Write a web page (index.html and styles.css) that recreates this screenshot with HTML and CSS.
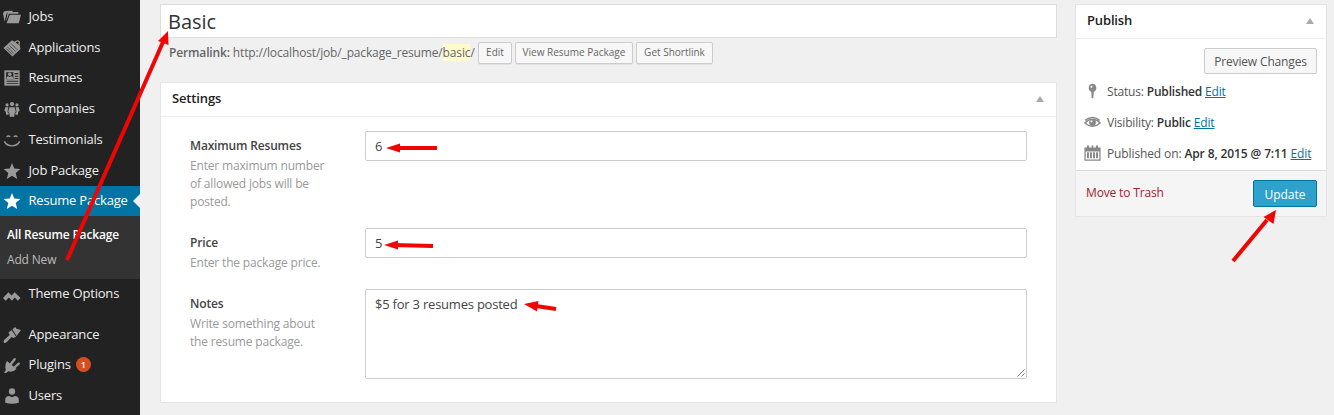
FILE: index.html
```html
<!DOCTYPE html>
<html lang="en">
<head>
<meta charset="utf-8">
<title>Edit Resume Package</title>
<link rel="stylesheet" href="styles.css">
</head>
<body>
<div class="admin">
  <nav class="sidebar">
    <a class="item"><svg class="icon" viewBox="0 0 20 20"><path d="M0 6l1-2 4-1 1 1.500-2 1.500-2.500 10H2zM5 5.500l1-2.500h4l1 1.500h6v2H6.500L3.500 15z"/><path d="M7.500 7.500H20L17.500 17H4z"/></svg><span>Jobs</span></a>
    <a class="item"><svg class="icon" viewBox="0 0 20 20"><path fill-rule="evenodd" d="M.5 10L10 1.500 12.500 3l4-2L19 3l-.5 4 1 4L10.500 19.500zM14 4l1.500 1 1.500 1.500.5-3-1-1z"/><path class="cut" d="M9 5l7 7M7 7l7 7M5 9l7 7M3.500 10.500l7 7"/></svg><span>Applications</span></a>
    <a class="item"><svg class="icon" viewBox="0 0 20 20"><path d="M1.500 1.500h17v17h-17z"/><path class="hole" d="M3.500 3.500h8v8h-8zM13 4.500h4v1.200h-4zM13 7.500h4v1.200h-4zM13 10h4v1.200h-4zM4 13h13v1.300H4zM4 15.700h13v1H4z"/><circle cx="7.500" cy="5.800" r="2"/><path d="M4 11.500V9.500q0-1.500 2-1.500l1.500 1L9 8q2 0 2 1.500v2z"/></svg><span>Resumes</span></a>
    <a class="item"><svg class="icon" viewBox="0 0 20 20"><circle cx="10" cy="4.500" r="2.400"/><circle cx="4.500" cy="5.500" r="1.800"/><circle cx="15.500" cy="5.500" r="1.800"/><path d="M7 8h6l1.200 5-1.200 1.500-.5 4h-5l-.5-4L5.800 13zM2.500 8H6L5 13l1.500 2-.5 1.500H3.500L3 13 1.500 12zM17.500 8H14l1 5-1.500 2 .5 1.500h2.500L17 13l1.500-1z"/></svg><span>Companies</span></a>
    <a class="item"><svg class="icon" viewBox="0 0 20 20"><path class="line" d="M4 6.500q2-2 4 0M12 6.500q2-2 4 0M1.500 11.500q2.500 5 8.500 5t8.500-5"/></svg><span>Testimonials</span></a>
    <a class="item"><svg class="icon" viewBox="0 0 20 20"><path d="M10 1l2.500 6.200 6.800.5-5.200 4.400 1.700 6.700L10 15.200l-5.800 3.600 1.700-6.700L.7 7.700l6.800-.5z"/></svg><span>Job Package</span></a>
    <a class="item current"><svg class="icon" viewBox="0 0 20 20"><path d="M10 1l2.500 6.200 6.800.5-5.200 4.400 1.700 6.700L10 15.200l-5.800 3.600 1.700-6.700L.7 7.700l6.800-.5z"/></svg><span>Resume Package</span></a>
    <div class="submenu"><a class="selected">All Resume Package</a><a class="add">Add New</a></div>
    <a class="item theme"><svg class="icon" viewBox="0 0 20 20"><path d="M0 14.500L6 8l3.500 3.800L13 8l6.500 6.500-3 3-3.300-3.700L10 17.500l-3.500-3.700L3 17.500z"/></svg><span>Theme Options</span></a>
    <a class="item"><svg class="icon" viewBox="0 0 20 20"><path d="M10.500 3.500L13.500 1l1.500 2 5 1.500-5 6.500zM9.500 4.500l5 7.500-3 1.200-2-1L4 18q-2.500 2-3.500-.5 0-1.500 1-2.300L7.500 10 6 7.500z"/></svg><span>Appearance</span></a>
    <a class="item"><svg class="icon" viewBox="0 0 20 20"><path d="M4.500 5.500l10.500 9q-4 4-9 2.500L3.500 19 1 18.500l2.200-3Q1.500 10 4.500 5.500z"/><path class="prong" d="M9 8.500l4-5M13 12.500l4.500-4"/></svg><span>Plugins</span><b class="badge">1</b></a>
    <a class="item"><svg class="icon" viewBox="0 0 20 20"><circle cx="10" cy="5" r="3.500"/><path d="M2.500 17.500V14q0-4 4.500-4 3 2.500 6 0 4.500 0 4.500 4v3.500q-7.500 2-15 0z"/></svg><span>Users</span></a>
  </nav>

  <main class="editor">
    <div class="title-field"><span>Basic</span></div>
    <div class="permalink">
      <span class="url"><b>Permalink:</b> http://localhost/job/_package_resume/<mark>basic</mark>/</span>
      <span class="small-button edit">Edit</span><span class="small-button view">View Resume Package</span><span class="small-button short">Get Shortlink</span>
    </div>
    <section class="box settings">
      <h2>Settings<i class="toggle"></i></h2>
      <div class="fields">
        <div class="row first"><div class="label"><b>Maximum Resumes</b><p>Enter maximum number<br>of allowed jobs will be<br>posted.</p></div><div class="input">6</div></div>
        <div class="row second"><div class="label"><b>Price</b><p>Enter the package price.</p></div><div class="input">5</div></div>
        <div class="row"><div class="label"><b>Notes</b><p>Write something about<br>the resume package.</p></div><div class="input area"><span>$5 for 3 resumes posted</span><svg class="grip" viewBox="0 0 8 8"><path d="M.5 7.500l7-7M4.500 7.500l3-3"/></svg></div></div>
      </div>
    </section>
  </main>

  <aside class="box publish">
    <h2>Publish<i class="toggle"></i></h2>
    <div class="preview"><span class="button">Preview Changes</span></div>
    <div class="meta"><svg class="icon" viewBox="0 0 20 20"><path d="M10 1a4.800 4.800 0 0 1 1.500 9.200L11 18H9l-.5-7.800A4.800 4.800 0 0 1 10 1z"/><circle class="shine" cx="8.800" cy="4.500" r="1.200"/></svg><span>Status: <b>Published</b> <u>Edit</u></span></div>
    <div class="meta"><svg class="icon" viewBox="0 0 20 20"><path class="line" d="M1 10.500Q10 1.500 19 10.500 10 18.500 1 10.500zM1.500 7.500Q10 .5 18.500 7.500"/><circle cx="10" cy="10" r="4"/><circle class="shine" cx="8.800" cy="8.600" r="1.300"/></svg><span>Visibility: <b>Public</b> <u>Edit</u></span></div>
    <div class="meta"><svg class="icon" viewBox="0 0 20 20"><path fill-rule="evenodd" d="M.5 3h3V.5H6V3h3V.5h2V3h3V.5h2.500V3h3v15.500H.5zM2 7.500V17h16V7.500z"/><path d="M3.500 8.500h2.300v7H3.500zM7 8.500h2.300v7H7zM10.700 8.500H13v7h-2.300zM14.200 8.500h2.300v7h-2.300z"/></svg><span class="date">Published on: <b>Apr 8, 2015 @ 7:11</b> <u>Edit</u></span></div>
    <footer><span class="trash">Move to Trash</span><span class="button primary">Update</span></footer>
  </aside>
</div>

<svg class="arrows" viewBox="0 0 1334 415">
  <path class="shaft" d="M67 260L163 42M437 148H397M433 246L393 245M556 309L536 306M1233 261L1267 220"/>
  <path d="M168 31L168.500 45 158 41zM386 148L400 143.500V152.500zM384 245L398 240.500V249.500zM524 304L538.500 301 537 311.500zM1276 210L1273.500 224 1263.500 217z"/>
</svg>
</body>
</html>
```

FILE: styles.css
```css
* { box-sizing: border-box; }
body {
  margin: 0;
  height: 415px;
  overflow: hidden;
  position: relative;
  background: #f0f0f0;
  color: #555;
  font: 12px/18px "Open Sans", sans-serif;
}
b { font-weight: 600; }
p { margin: 0; }
span, a { white-space: nowrap; }
.admin { display: flex; height: 415px; align-items: flex-start; }

.sidebar {
  width: 140px;
  height: 415px;
  padding-top: 1.500px;
  background: #222;
  color: #eee;
  flex: none;
  overflow: hidden;
}
.item {
  display: flex;
  align-items: center;
  height: 30.750px;
  padding: 0 0 2px 3px;
  font-size: 13px;
  letter-spacing: -.19px;
}
.icon { width: 18px; height: 18px; margin-right: 7.500px; fill: #999; flex: none; }
.item .icon { margin-top: 2px; }
.icon .hole { fill: #222; }
.icon .cut { fill: none; stroke: #222; stroke-width: .7; }
.icon .line { fill: none; stroke: #999; stroke-width: 1.600; }
.icon .prong { fill: none; stroke: #999; stroke-width: 2.600; stroke-linecap: round; }
.icon .shine { fill: #fff; }
.current { height: 30px; background: #0074a2; color: #fff; position: relative; }
.current .icon { fill: #fff; }
.current::after {
  content: "";
  position: absolute;
  right: 0;
  top: 8px;
  border: 7px solid transparent;
  border-left: 0;
  border-right-color: #f0f0f0;
}
.submenu {
  height: 63px;
  padding: 10px 7px 0;
  background: #333;
  display: flex;
  flex-direction: column;
  gap: 7px;
  align-items: flex-start;
  letter-spacing: -.17px;
}
.selected { color: #fff; font-weight: 600; }
.add { color: #bbb; }
.theme { margin-bottom: 9.500px; }
.badge {
  width: 15px;
  height: 15px;
  margin: 1px 0 0 5px;
  border-radius: 50%;
  background: #d54e21;
  color: #fff;
  font-size: 9px;
  line-height: 15px;
  text-align: center;
}

.editor { width: 897px; margin: 4px 18px 0 20px; flex: none; }
.title-field {
  height: 34px;
  border: 1px solid #ddd;
  background: #fff;
  padding-left: 7px;
  font-size: 20px;
  line-height: 33px;
  color: #333;
}
.permalink { display: flex; align-items: flex-start; height: 44px; padding: 4px 0 0 9px; color: #666; }
.url { width: 309px; line-height: 22px; letter-spacing: -.15px; }
mark { background: #fffbcc; color: inherit; }
.small-button {
  height: 22px;
  border: 1px solid #ccc;
  border-radius: 2px;
  background: #f7f7f7;
  box-shadow: 0 1px 0 rgba(0, 0, 0, .06);
  font-size: 10px;
  line-height: 19px;
  text-align: center;
  margin-right: 3px;
}
.edit { width: 34px; }
.view { width: 118px; }
.short { width: 77px; }

.box { background: #fff; border: 1px solid #e5e5e5; }
h2 {
  margin: 0;
  height: 34px;
  padding: 0 12px 0 11px;
  border-bottom: 1px solid #eee;
  font-size: 13px;
  line-height: 31px;
  font-weight: 600;
  letter-spacing: -.15px;
  color: #222;
  display: flex;
  justify-content: space-between;
}
.toggle { margin-top: 13px; border: 4px solid transparent; border-top: 0; border-bottom: 6px solid #aaa; height: 0; }
.settings { height: 321px; }
.fields { padding: 14px 29px 0; }
.row { display: grid; grid-template-columns: 175px 662px; align-items: start; }
.first { height: 97px; }
.second { height: 61px; }
.label { padding-top: 6px; color: #999; letter-spacing: -.17px; }
.label b { display: block; line-height: 18px; color: #444; }
.label p { padding-top: 2px; line-height: 18px; }
.input { height: 30px; border: 1px solid #ccc; border-radius: 2px; padding: 0 9px; color: #444; font-size: 13px; letter-spacing: -.22px; line-height: 29px; }
.area { height: 90px; position: relative; }
.grip { position: absolute; width: 8px; height: 8px; right: 1px; bottom: 1px; fill: none; stroke: #777; }

.publish { width: 252px; height: 213px; margin-top: 4px; flex: none; }
.preview { display: flex; justify-content: flex-end; padding: 9px 9px 0; height: 38px; }
.button {
  width: 113px;
  height: 26px;
  border: 1px solid #ccc;
  border-radius: 2px;
  background: #f7f7f7;
  font-size: 12px;
  letter-spacing: -.15px;
  line-height: 25px;
  text-align: center;
}
.meta { display: flex; align-items: center; height: 31px; padding: 0 0 2px 8px; color: #555; letter-spacing: -.18px; }
.meta .icon { width: 17px; height: 17px; margin-right: 6px; fill: #888; }
.meta .line { stroke: #888; }
.meta .date { letter-spacing: -.12px; }
.meta b { color: #333; }
u { color: #0074a2; }
footer {
  height: 46px;
  border-top: 1px solid #ddd;
  background: #f5f5f5;
  padding: 9px 9px 0 10px;
  display: flex;
  justify-content: space-between;
}
.trash { color: #a0222e; line-height: 26px; letter-spacing: -.15px; }
.primary { width: 64px; height: 27px; background: #2ea2cc; border-color: #0074a2; color: #fff; line-height: 27px; letter-spacing: 0; }

.arrows { position: absolute; inset: 0; width: 1334px; height: 415px; fill: #f00505; pointer-events: none; }
.shaft { fill: none; stroke: #f00505; stroke-width: 4; }
```
